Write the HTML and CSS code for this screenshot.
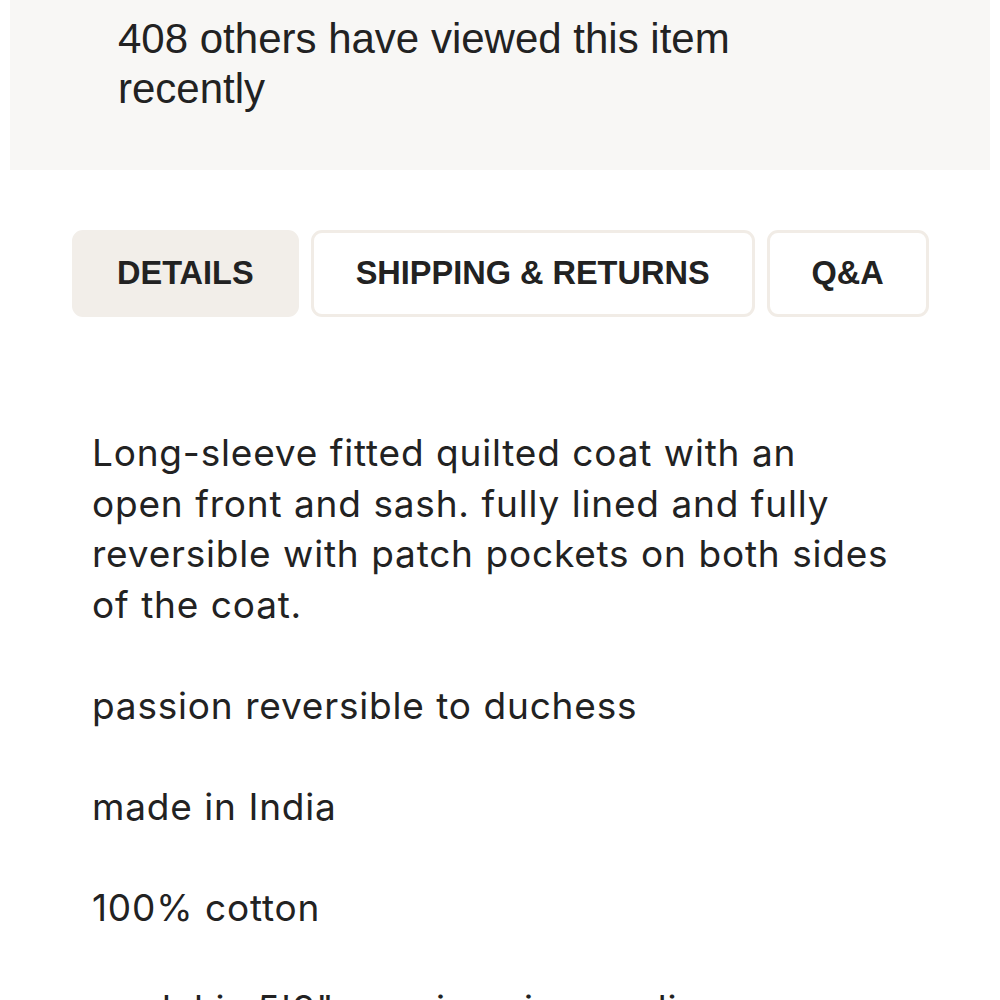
FILE: index.html
```html
<!DOCTYPE html>
<html lang="en">
<head>
<meta charset="utf-8">
<title>Details</title>
<link rel="stylesheet" href="styles.css">
</head>
<body>
<section class="viewed">
  <p class="viewed-text">408 others have viewed this item recently</p>
</section>
<nav class="tabs">
  <button class="tab tab-active">DETAILS</button>
  <button class="tab">SHIPPING &amp; RETURNS</button>
  <button class="tab">Q&amp;A</button>
</nav>
<article class="details">
  <p>Long-sleeve fitted quilted coat with an open front and sash. fully lined and fully reversible with patch pockets on both sides of the coat.</p>
  <p>passion reversible to duchess</p>
  <p>made in India</p>
  <p>100% cotton</p>
  <p>model is 5'9" wearing size medium</p>
</article>
</body>
</html>
```
FILE: styles.css
```css
html, body {
  margin: 0;
  padding: 0;
  background: #ffffff;
  color: #222222;
}
body {
  width: 1000px;
  height: 1000px;
  overflow: hidden;
}
.viewed {
  margin: 0 10px;
  height: 170px;
  box-sizing: border-box;
  padding: 14px 0 0 108px;
  background: #f8f7f5;
}
.viewed-text {
  margin: 0;
  width: 660px;
  font-family: "Liberation Sans", Arial, sans-serif;
  font-size: 42px;
  line-height: 50px;
  color: #222222;
}
.tabs {
  display: flex;
  gap: 12px;
  margin-top: 60px;
  padding-left: 72px;
}
.tab {
  height: 87px;
  box-sizing: border-box;
  padding: 0 42px;
  border: 3px solid #f1ece6;
  border-radius: 11px;
  background: #ffffff;
  font-family: "Liberation Sans", Arial, sans-serif;
  font-weight: 700;
  font-size: 32.5px;
  color: #222222;
}
.tab-active {
  background: #f2eee9;
  border-color: #f2eee9;
}
.details {
  padding: 0 0 0 92px;
  margin-top: 111px;
  width: 804px;
  font-family: "Inter", sans-serif;
  font-size: 37px;
  letter-spacing: 0.8px;
  word-spacing: 0.5px;
  line-height: 50.5px;
  color: #222222;
}
.details p {
  margin: 0 0 50.5px 0;
}
```
